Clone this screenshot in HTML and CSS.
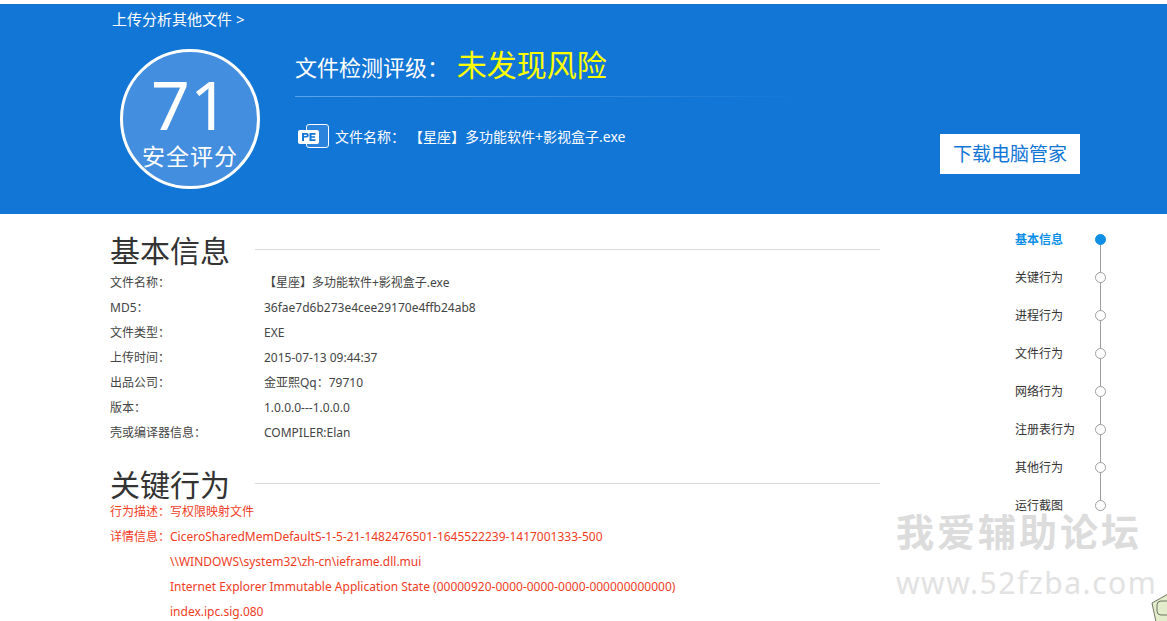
FILE: index.html
```html
<!DOCTYPE html>
<html lang="zh-CN">
<head>
    <meta charset="UTF-8">
    <title>文件检测报告</title>
    <link rel="stylesheet" href="styles.css">
</head>
<body>
    <header class="hero">
        <a class="upload-link" href="#">上传分析其他文件 &gt;</a>
        <div class="hero-main">
            <div class="score">
                <div class="score-num">71</div>
                <div class="score-label">安全评分</div>
            </div>
            <div class="hero-info">
                <h1 class="rating">文件检测评级： <span class="rating-value">未发现风险</span></h1>
                <div class="hero-line"></div>
                <div class="file-row">
                    <svg class="pe-icon" width="32" height="24" viewBox="0 0 32 24">
                        <rect x="9.5" y="0.5" width="22" height="23" rx="2.5" fill="#2a83dc" stroke="#fff"/>
                        <rect x="1" y="6" width="21" height="14" rx="2" fill="#fff"/>
                        <path d="M5 9h4.5a2.3 2.3 0 0 1 0 4.6H7V17H5zM7 10.7v1.3h2.2a.65.65 0 0 0 0-1.3zM12.5 9h6v1.7h-4v1.5h3.6v1.6h-3.6v1.5h4V17h-6z" fill="#1276d6"/>
                    </svg>
                    <span class="file-label">文件名称：</span>
                    <span class="file-name">【星座】多功能软件+影视盒子.exe</span>
                </div>
            </div>
            <a class="download-btn" href="#">下载电脑管家</a>
        </div>
    </header>

    <div class="content">
        <main class="report">
            <section class="block">
                <div class="block-head">
                    <h2>基本信息</h2>
                    <div class="head-line"></div>
                </div>
                <dl class="info">
                    <div class="info-row"><dt>文件名称：</dt><dd>【星座】多功能软件+影视盒子.exe</dd></div>
                    <div class="info-row"><dt>MD5：</dt><dd>36fae7d6b273e4cee29170e4ffb24ab8</dd></div>
                    <div class="info-row"><dt>文件类型：</dt><dd>EXE</dd></div>
                    <div class="info-row"><dt>上传时间：</dt><dd>2015-07-13 09:44:37</dd></div>
                    <div class="info-row"><dt>出品公司：</dt><dd>金亚熙Qq：79710</dd></div>
                    <div class="info-row"><dt>版本：</dt><dd>1.0.0.0---1.0.0.0</dd></div>
                    <div class="info-row"><dt>壳或编译器信息：</dt><dd>COMPILER:Elan</dd></div>
                </dl>
            </section>

            <section class="block block-key">
                <div class="block-head">
                    <h2>关键行为</h2>
                    <div class="head-line"></div>
                </div>
                <dl class="behavior">
                    <div class="info-row"><dt>行为描述：</dt><dd>写权限映射文件</dd></div>
                    <div class="info-row">
                        <dt>详情信息：</dt>
                        <dd>
                            <p>CiceroSharedMemDefaultS-1-5-21-1482476501-1645522239-1417001333-500</p>
                            <p>\\WINDOWS\system32\zh-cn\ieframe.dll.mui</p>
                            <p>Internet Explorer Immutable Application State (00000920-0000-0000-0000-000000000000)</p>
                            <p>index.ipc.sig.080</p>
                        </dd>
                    </div>
                </dl>
            </section>
        </main>

        <nav class="side-nav">
            <a class="nav-item active" href="#">基本信息</a>
            <a class="nav-item" href="#">关键行为</a>
            <a class="nav-item" href="#">进程行为</a>
            <a class="nav-item" href="#">文件行为</a>
            <a class="nav-item" href="#">网络行为</a>
            <a class="nav-item" href="#">注册表行为</a>
            <a class="nav-item" href="#">其他行为</a>
            <a class="nav-item" href="#">运行截图</a>
        </nav>
    </div>

    <div class="watermark">
        <div class="wm-title">我爱辅助论坛</div>
        <div class="wm-url">www.52fzba.com</div>
    </div>

    <svg class="corner-pet" width="17" height="28" viewBox="0 0 17 28">
        <path d="M1 9L17 0V28H5z" fill="#e3eccb" stroke="#6f7563"/>
        <rect x="6" y="7" width="14" height="14" rx="4" fill="none" stroke="#6f7563"/>
    </svg>
</body>
</html>
```

FILE: styles.css
```css
html, body {
    height: 100%;
    overflow: hidden;
}

body {
    position: relative;
    margin: 0;
    padding-top: 4px;
    box-sizing: border-box;
    background-color: #fff;
    color: #444;
    font-family: "Noto Sans", "Noto Sans CJK SC", sans-serif;
    font-size: 12px;
}

a {
    text-decoration: none;
    color: inherit;
}

.hero {
    height: 210px;
    padding-left: 112px;
    box-sizing: border-box;
    background-color: #1276d6;
    color: #fff;
}

.upload-link {
    display: block;
    height: 30px;
    font-size: 15px;
    line-height: 30px;
}

.hero-main {
    display: flex;
    align-items: flex-start;
}

.score {
    width: 134px;
    height: 134px;
    margin: 15px 0 0 8px;
    border: 3px solid #fff;
    border-radius: 50%;
    background-color: #438ede;
    text-align: center;
}

.score-num {
    margin-top: 15px;
    font-size: 68px;
    line-height: 74px;
}

.score-label {
    font-size: 23px;
    line-height: 30px;
    letter-spacing: 1px;
}

.hero-info {
    width: 510px;
    margin-left: 35px;
}

.rating {
    height: 62px;
    margin: 0;
    font-size: 22px;
    font-weight: normal;
    line-height: 62px;
    white-space: nowrap;
}

.rating-value {
    margin-left: 2px;
    color: #ffff00;
    font-size: 30px;
}

.hero-line {
    height: 1px;
    background: linear-gradient(to right, #5da3e8, #1276d6);
}

.file-row {
    display: flex;
    align-items: center;
    margin-top: 27px;
    font-size: 14px;
    white-space: nowrap;
}

.pe-icon {
    margin: 0 6px 0 2px;
}

.file-label {
    margin-right: 4px;
}

.download-btn {
    width: 140px;
    height: 40px;
    margin: 100px 0 0 135px;
    background-color: #fff;
    color: #1276d6;
    font-size: 19px;
    line-height: 40px;
    text-align: center;
}

.content {
    display: flex;
    padding-left: 110px;
}

.report {
    width: 770px;
}

.block-head {
    display: flex;
    align-items: center;
    height: 70px;
}

.block-head h2 {
    margin: 0 25px 0 0;
    color: #333;
    font-size: 30px;
    font-weight: normal;
}

.head-line {
    flex: 1;
    height: 1px;
    background-color: #d9d9d9;
}

.info,
.behavior {
    margin: 0;
}

.info-row {
    display: flex;
    line-height: 25px;
}

.info {
    margin-top: -14px;
}

.info dt {
    width: 154px;
}

.info dd,
.behavior dd {
    margin: 0;
}

.block-key {
    margin-top: 8px;
}

.block-key .block-head {
    height: 60px;
}

.behavior {
    margin-top: -14px;
    color: #f03c1e;
}

.behavior dt {
    width: 60px;
}

.behavior p {
    margin: 0;
    white-space: nowrap;
}

.side-nav {
    position: absolute;
    top: 221px;
    left: 1015px;
    width: 92px;
    display: flex;
    flex-direction: column;
    background: linear-gradient(#9e9e9e, #9e9e9e) no-repeat 85px 19px / 1px 266px;
}

.nav-item {
    position: relative;
    height: 38px;
    color: #333;
    line-height: 38px;
    white-space: nowrap;
}

.nav-item::after {
    content: "";
    position: absolute;
    top: 13px;
    left: 80px;
    width: 9px;
    height: 9px;
    border: 1px solid #9e9e9e;
    border-radius: 50%;
    background-color: #fff;
}

.nav-item.active {
    color: #0d8fe6;
    font-weight: bold;
}

.nav-item.active::after {
    border-color: #0d8fe6;
    background-color: #0d8fe6;
}

.watermark {
    position: absolute;
    top: 505px;
    left: 896px;
    color: #dcdcdc;
    white-space: nowrap;
}

.wm-title {
    font-size: 38px;
    font-weight: bold;
    line-height: 52px;
    letter-spacing: 3px;
}

.wm-url {
    margin-top: 4px;
    color: #e2e2e2;
    font-size: 30px;
    line-height: 44px;
    letter-spacing: 1.5px;
}

.corner-pet {
    position: absolute;
    top: 594px;
    left: 1151px;
}
```
